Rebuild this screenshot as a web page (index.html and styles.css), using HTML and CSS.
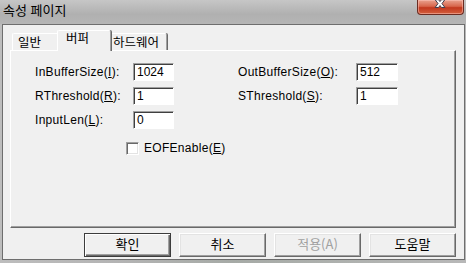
FILE: index.html
```html
<!DOCTYPE html>
<html lang="ko">
<head>
<meta charset="utf-8">
<title>속성 페이지</title>
<link rel="stylesheet" href="styles.css">
</head>
<body>
<div class="window">
  <div class="titlebar">
    <span class="title">속성 페이지</span>
    <div class="close">
      <svg width="47" height="15" viewBox="0 0 47 15">
        <path d="M18.5 0.5 L22 0.5 L23.5 2.5 L25 0.5 L28.5 0.5 L25.5 4.5 L28.5 8.5 L25 8.5 L23.5 6.5 L22 8.5 L18.5 8.5 L21.5 4.5 Z" fill="#ffffff" stroke="#3a3a4a" stroke-width="1"/>
      </svg>
    </div>
  </div>
  <div class="client">
    <div class="tabs">
      <div class="tab first">일반</div>
      <div class="tab active">버퍼</div>
      <div class="tab last">하드웨어</div>
    </div>
    <div class="panel">
      <div class="form">
        <label class="lbl">InBufferSize(<u>I</u>):</label>
        <div class="field">1024</div>
        <label class="lbl right">OutBufferSize(<u>O</u>):</label>
        <div class="field wide">512</div>

        <label class="lbl">RThreshold(<u>R</u>):</label>
        <div class="field">1</div>
        <label class="lbl right">SThreshold(<u>S</u>):</label>
        <div class="field wide">1</div>

        <label class="lbl">InputLen(<u>L</u>):</label>
        <div class="field">0</div>
      </div>
      <div class="check">
        <span class="box"></span>
        <span>EOFEnable(<u>E</u>)</span>
      </div>
    </div>
    <div class="buttons">
      <div class="btn default">확인</div>
      <div class="btn">취소</div>
      <div class="btn disabled">적용(A)</div>
      <div class="btn">도움말</div>
    </div>
  </div>
</div>
</body>
</html>
```

FILE: styles.css
```css
* { box-sizing: border-box; }
html, body { margin: 0; padding: 0; }
body {
  width: 466px;
  height: 263px;
  overflow: hidden;
  font-family: "Liberation Sans", "Noto Sans CJK KR", sans-serif;
  font-size: 12px;
  color: #000;
}
.window {
  width: 466px;
  height: 263px;
  display: flex;
  flex-direction: column;
  background: linear-gradient(90deg, #bdbdbd 0%, #b4b4b4 25%, #a6aaa6 50%, #adb0ad 70%, #b8b8b8 100%);
}
.titlebar {
  height: 24px;
  display: flex;
  justify-content: space-between;
  align-items: flex-start;
  padding-left: 3px;
  padding-right: 2px;
  background: linear-gradient(180deg, #c6c6c6 0%, #b0b0b0 60%, #b6b6b6 100%);
}
.title {
  font-family: "Noto Sans CJK KR", sans-serif;
  font-size: 13px;
  line-height: 14px;
  margin-top: 3px;
  color: #000;
}
.close {
  width: 47px;
  height: 15px;
  border: 1px solid #6b2c22;
  border-top: none;
  border-radius: 0 0 4px 4px;
  background: linear-gradient(180deg, #e9a28f 0%, #d8664c 45%, #c2381e 55%, #d3603e 100%);
  box-shadow: inset 0 0 0 1px rgba(255, 200, 190, 0.5);
  display: flex;
}
.close svg { display: block; margin: -1px 0 0 -1px; }
.client {
  flex: 1;
  margin: 0 1px 3px 2px;
  border: 1px solid #6e6e6e;
  background: #f0f0f0;
  padding: 6px 8px 0 7px;
  display: flex;
  flex-direction: column;
}
.tabs {
  display: flex;
  align-items: flex-end;
  height: 20px;
  padding-left: 2px;
  position: relative;
  z-index: 1;
  margin-bottom: -1px;
}
.tab {
  font-family: "Noto Sans CJK KR", sans-serif;
  font-size: 12.5px;
  line-height: 12px;
  height: 17px;
  padding-top: 2px;
  border-top: 1px solid #ffffff;
  border-left: 1px solid #ffffff;
  border-right: 1px solid #a0a0a0;
  box-shadow: 1px 0 0 #696969;
  border-top-left-radius: 2px;
  border-top-right-radius: 2px;
  background: #f0f0f0;
  text-align: left;
}
.tab.first { width: 47px; padding-left: 5px; margin-bottom: 1px; height: 17px; }
.tab.active {
  width: 54px;
  height: 21px;
  margin-left: -2px;
  margin-right: -2px;
  padding-left: 8px;
  padding-top: 1px;
  position: relative;
  z-index: 2;
}
.tab.last { width: 58px; padding-left: 3px; margin-bottom: 1px; height: 17px; }
.panel {
  width: 446px;
  height: 178px;
  border-top: 1px solid #ffffff;
  border-left: 1px solid #ffffff;
  border-right: 1px solid #696969;
  border-bottom: 1px solid #696969;
  box-shadow: inset -1px -1px 0 #a0a0a0;
  padding: 12px 0 0 24px;
}
.form {
  display: grid;
  grid-template-columns: 98px 41px 64px 118px 42px;
  grid-auto-rows: 18px;
  row-gap: 6px;
  align-items: center;
}
.lbl { grid-column: 1; line-height: 18px; white-space: nowrap; letter-spacing: 0.3px; }
.lbl.right { grid-column: 4; }
.field {
  height: 18px;
  background: #ffffff;
  border-top: 1px solid #a0a0a0;
  border-left: 1px solid #a0a0a0;
  border-right: 1px solid #ffffff;
  border-bottom: 1px solid #ffffff;
  box-shadow: inset 1px 1px 0 #404040;
  padding-left: 3px;
  line-height: 16px;
}
.field.wide { grid-column: 5; }
.check {
  margin: 13px 0 0 91px;
  display: flex;
  align-items: center;
  gap: 5px;
  height: 13px;
  line-height: 13px;
  letter-spacing: 0.3px;
}
.box {
  width: 13px;
  height: 13px;
  background: #ffffff;
  border-top: 1px solid #a0a0a0;
  border-left: 1px solid #a0a0a0;
  border-right: 1px solid #ffffff;
  border-bottom: 1px solid #ffffff;
  box-shadow: inset 1px 1px 0 #696969, inset -1px -1px 0 #e3e3e3;
}
.buttons {
  display: flex;
  justify-content: flex-end;
  gap: 8px;
  margin-top: 5px;
}
.btn {
  width: 87px;
  height: 24px;
  font-family: "Noto Sans CJK KR", sans-serif;
  font-size: 13px;
  line-height: 20px;
  text-align: center;
  background: #f0f0f0;
  border-top: 1px solid #ffffff;
  border-left: 1px solid #ffffff;
  border-right: 1px solid #696969;
  border-bottom: 1px solid #696969;
  box-shadow: inset -1px -1px 0 #a0a0a0, inset 1px 1px 0 #e3e3e3;
}
.btn.default {
  border: 1px solid #3c3c3c;
  box-shadow: inset 1px 1px 0 #ffffff, inset -1px -1px 0 #696969, inset -2px -2px 0 #a0a0a0;
}
.btn.disabled { color: #a0a0a0; }
```
